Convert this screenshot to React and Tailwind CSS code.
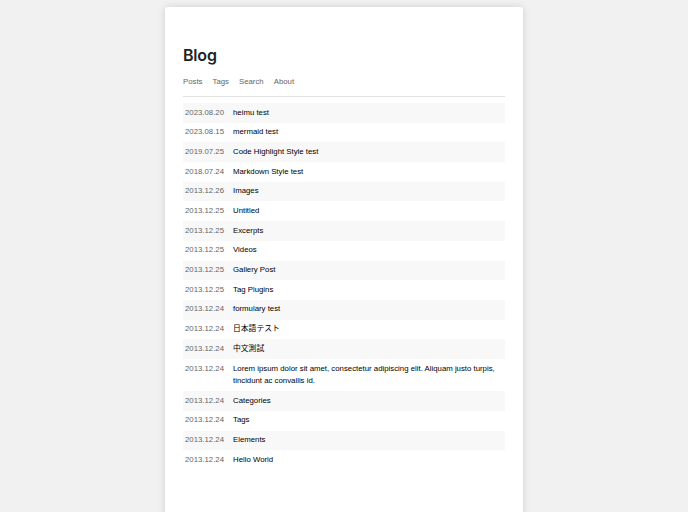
const posts = [
  { date: "2023.08.20", title: "heimu test" },
  { date: "2023.08.15", title: "mermaid test" },
  { date: "2019.07.25", title: "Code Highlight Style test" },
  { date: "2018.07.24", title: "Markdown Style test" },
  { date: "2013.12.26", title: "Images" },
  { date: "2013.12.25", title: "Untitled" },
  { date: "2013.12.25", title: "Excerpts" },
  { date: "2013.12.25", title: "Videos" },
  { date: "2013.12.25", title: "Gallery Post" },
  { date: "2013.12.25", title: "Tag Plugins" },
  { date: "2013.12.24", title: "formulary test" },
  { date: "2013.12.24", title: "日本語テスト" },
  { date: "2013.12.24", title: "中文測試" },
  {
    date: "2013.12.24",
    title:
      "Lorem ipsum dolor sit amet, consectetur adipiscing elit. Aliquam justo turpis, tincidunt ac convallis id.",
  },
  { date: "2013.12.24", title: "Categories" },
  { date: "2013.12.24", title: "Tags" },
  { date: "2013.12.24", title: "Elements" },
  { date: "2013.12.24", title: "Hello World" },
];

export default function App() {
  return (
    <div
      className="h-[512px] w-[688px] overflow-hidden bg-[#f1f1f1] flex justify-center"
      style={{ fontFamily: '"Liberation Sans", "Noto Sans CJK JP", sans-serif' }}
    >
      <div className="mt-[7px] w-[358px] h-[600px] bg-white rounded-[3px] shadow-[0_0_7px_rgba(0,0,0,0.14)] px-[18px] pt-[38px]">
        <h1
          className="text-[16px] leading-[20px] font-semibold text-[#222] tracking-[-0.2px]"
          style={{ fontFamily: "Inter, sans-serif" }}
        >
          Blog
        </h1>

        {/* nav */}
        <nav className="mt-[12px] border-b border-[#e2e2e2] flex gap-[10px] text-[7.8px] leading-[10px] text-[#666] pb-[9px]">
          <span>Posts</span>
          <span>Tags</span>
          <span>Search</span>
          <span>About</span>
        </nav>

        <ul className="mt-[6px]">
          {posts.map((p, i) => (
            <li
              key={i}
              className={`flex px-[2px] py-[3.6px] text-[7.8px] leading-[12.5px] ${
                i % 2 === 0 ? "bg-[#f8f8f8]" : ""
              }`}
            >
              <span className="w-[48px] shrink-0 text-[#666]">{p.date}</span>
              <span className="text-black">{p.title}</span>
            </li>
          ))}
        </ul>
      </div>
    </div>
  );
}
